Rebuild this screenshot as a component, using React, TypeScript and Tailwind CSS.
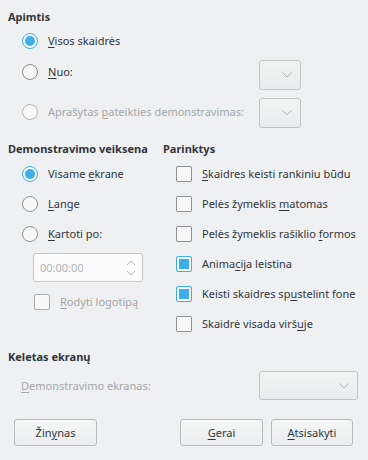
import type { ReactNode } from 'react';

const FONT = { fontFamily: '"Noto Sans", "Liberation Sans", sans-serif' };

function U({ children }: { children: ReactNode }) {
  return <span className="underline underline-offset-[2px] decoration-1">{children}</span>;
}

function Radio({ checked, disabled, children }: { checked?: boolean; disabled?: boolean; children: ReactNode }) {
  return (
    <div className="flex items-center gap-[10px] whitespace-nowrap">
      <span
        className={
          'flex h-[16px] w-[16px] shrink-0 items-center justify-center rounded-full border bg-[#f8f8f9] ' +
          (checked ? 'border-[#3daee9]' : disabled ? 'border-[#b4b6b8]' : 'border-[#8e9193]')
        }
      >
        {checked && <span className="h-[10px] w-[10px] rounded-full bg-[#3daee9]" />}
      </span>
      <span className={disabled ? 'text-[#a4a7a9]' : 'text-[#31363b]'}>{children}</span>
    </div>
  );
}

function Check({ checked, disabled, children }: { checked?: boolean; disabled?: boolean; children: ReactNode }) {
  return (
    <div className="flex items-center gap-[10px] whitespace-nowrap">
      <span
        className={
          'flex h-[16px] w-[16px] shrink-0 items-center justify-center rounded-[2px] border bg-[#f8f8f9] ' +
          (checked ? 'border-[#3daee9]' : disabled ? 'border-[#a9abad]' : 'border-[#8e9193]')
        }
      >
        {checked && <span className="h-[10px] w-[10px] bg-[#3daee9]" />}
      </span>
      <span className={disabled ? 'text-[#a4a7a9]' : 'text-[#31363b]'}>{children}</span>
    </div>
  );
}

function Chevron() {
  return (
    <svg width="10" height="6" viewBox="0 0 10 6" fill="none">
      <path d="M0.5 0.5 L5 5 L9.5 0.5" stroke="#b0b3b5" strokeWidth="1" />
    </svg>
  );
}

function Combo({ className }: { className: string }) {
  return (
    <div
      className={
        'flex shrink-0 items-center justify-end rounded-[3px] border border-[#c2c4c6] bg-gradient-to-b from-[#f3f4f4] to-[#eaebec] pr-[8px] ' +
        className
      }
    >
      <Chevron />
    </div>
  );
}

function Button({ children, className }: { children: ReactNode; className: string }) {
  return (
    <div
      className={
        'flex h-[27px] items-center justify-center rounded-[3px] border border-[#b8babc] bg-gradient-to-b from-[#f6f7f7] to-[#ebeced] text-[#31363b] ' +
        className
      }
    >
      {children}
    </div>
  );
}

export default function App() {
  return (
    <div className="h-[460px] w-[368px] overflow-hidden bg-[#eff0f1] text-[11px] leading-[18px] text-[#31363b]" style={FONT}>
      {/* Apimtis */}
      <div className="pl-[8px] pt-[8px] font-bold">Apimtis</div>
      <div className="pl-[22px] pt-[7px]">
        <div className="flex h-[16px] items-center">
          <Radio checked>
            <U>V</U>isos skaidrės
          </Radio>
        </div>
        <div className="mt-[11px] flex h-[30px] items-start">
          <div className="mt-[3px] flex-1">
            <Radio>
              <U>N</U>uo:
            </Radio>
          </div>
          <Combo className="mr-[67px] h-[30px] w-[42px]" />
        </div>
        <div className="mt-[8px] flex h-[30px] items-start">
          <div className="mt-[5px] flex-1">
            <Radio disabled>
              Aprašytas <U>p</U>ateikties demonstravimas:
            </Radio>
          </div>
          <Combo className="mr-[67px] h-[30px] w-[42px]" />
        </div>
      </div>

      {/* Demonstravimo veiksena + Parinktys */}
      <div className="mt-[12px] flex">
        <div className="w-[163px] shrink-0 pl-[8px]">
          <div className="whitespace-nowrap font-bold">Demonstravimo veiksena</div>
          <div className="pl-[14px] pt-[1px]">
            <div className="flex h-[30px] items-center">
              <Radio checked>
                Visame <U>e</U>krane
              </Radio>
            </div>
            <div className="flex h-[30px] items-center">
              <Radio>
                <U>L</U>ange
              </Radio>
            </div>
            <div className="flex h-[30px] items-center">
              <Radio>
                <U>K</U>artoti po:
              </Radio>
            </div>
          </div>
          <div className="ml-[25px] mt-[4px] flex h-[29px] w-[110px] items-center justify-between rounded-[3px] border border-[#c6c8ca] bg-[#fcfcfc] pl-[6px] pr-[6px] text-[#b0b3b5]">
            <span>00:00:00</span>
            <svg width="10" height="18" viewBox="0 0 10 18" fill="none">
              <path d="M1 6 L5 2 L9 6" stroke="#b0b3b5" strokeWidth="1" />
              <path d="M1 12 L5 16 L9 12" stroke="#b0b3b5" strokeWidth="1" />
            </svg>
          </div>
          <div className="ml-[26px] mt-[11px]">
            <Check disabled>
              <U>R</U>odyti logotipą
            </Check>
          </div>
        </div>
        <div className="flex-1">
          <div className="font-bold">Parinktys</div>
          <div className="pl-[13px] pt-[1px]">
            <div className="flex h-[30px] items-center">
              <Check>
                <U>S</U>kaidres keisti rankiniu būdu
              </Check>
            </div>
            <div className="flex h-[30px] items-center">
              <Check>
                Pelės žymeklis <U>m</U>atomas
              </Check>
            </div>
            <div className="flex h-[30px] items-center">
              <Check>
                Pelės žymeklis rašiklio <U>f</U>ormos
              </Check>
            </div>
            <div className="flex h-[30px] items-center">
              <Check checked>
                Anima<U>c</U>ija leistina
              </Check>
            </div>
            <div className="flex h-[30px] items-center">
              <Check checked>
                Keisti skaidres sp<U>u</U>stelint fone
              </Check>
            </div>
            <div className="flex h-[30px] items-center">
              <Check>
                Skaidrė visada virš<U>u</U>je
              </Check>
            </div>
          </div>
        </div>
      </div>

      {/* Keletas ekranų */}
      <div className="mt-[9px] pl-[8px] font-bold">Keletas ekranų</div>
      <div className="mt-[5px] flex h-[29px] items-center pl-[21px] pr-[10px]">
        <span className="flex-1 text-[#a4a7a9]">
          <U>D</U>emonstravimo ekranas:
        </span>
        <Combo className="h-[29px] w-[99px]" />
      </div>

      {/* Buttons */}
      <div className="mt-[19px] flex pl-[14px] pr-[15px]">
        <Button className="w-[83px]">
          Žin<U>y</U>nas
        </Button>
        <div className="flex-1" />
        <Button className="w-[83px]">
          <U>G</U>erai
        </Button>
        <Button className="ml-[8px] w-[82px]">
          <U>A</U>tsisakyti
        </Button>
      </div>
    </div>
  );
}
